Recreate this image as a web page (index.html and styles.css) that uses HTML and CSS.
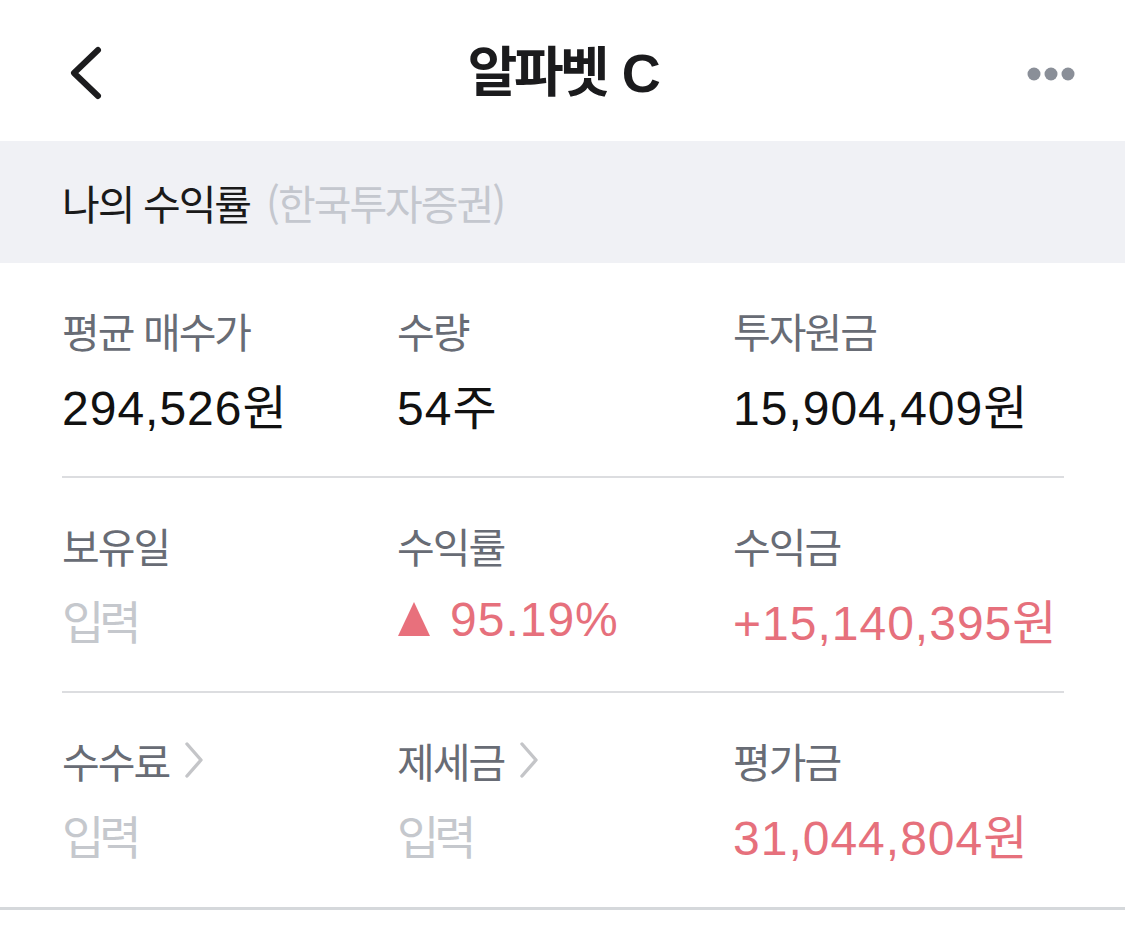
FILE: index.html
```html
<!DOCTYPE html>
<html lang="ko">
<head>
<meta charset="utf-8">
<title>알파벳 C</title>
<link rel="stylesheet" href="styles.css">
</head>
<body>
<header class="topbar">
  <div class="topbar-left">
    <svg class="back" width="40" height="56" viewBox="0 0 40 56" aria-hidden="true">
      <path d="M33 5 L9 28 L33 51" fill="none" stroke="#1c1c1e" stroke-width="6" stroke-linecap="round" stroke-linejoin="round"/>
    </svg>
  </div>
  <h1 class="title">알파벳 C</h1>
  <div class="topbar-right">
    <svg class="more" width="52" height="16" viewBox="0 0 52 16" aria-hidden="true">
      <circle cx="7" cy="8" r="6.5" fill="#8a8f98"/>
      <circle cx="24" cy="8" r="6.5" fill="#8a8f98"/>
      <circle cx="41" cy="8" r="6.5" fill="#8a8f98"/>
    </svg>
  </div>
</header>

<section class="band">
  <span class="band-title">나의 수익률</span>
  <span class="band-sub">(한국투자증권)</span>
</section>

<section class="stats">
  <div class="row">
    <div class="cell">
      <div class="label">평균 매수가</div>
      <div class="value">294,526원</div>
    </div>
    <div class="cell">
      <div class="label">수량</div>
      <div class="value">54주</div>
    </div>
    <div class="cell">
      <div class="label">투자원금</div>
      <div class="value">15,904,409원</div>
    </div>
  </div>
  <div class="row">
    <div class="cell">
      <div class="label">보유일</div>
      <div class="value placeholder">입력</div>
    </div>
    <div class="cell">
      <div class="label">수익률</div>
      <div class="value up"><svg class="tri" width="32" height="34" viewBox="0 0 32 34" aria-hidden="true"><polygon points="16,0 32,34 0,34" fill="#e8707c"/></svg>95.19%</div>
    </div>
    <div class="cell">
      <div class="label">수익금</div>
      <div class="value up">+15,140,395원</div>
    </div>
  </div>
  <div class="row">
    <div class="cell">
      <div class="label">수수료<svg class="chev" width="22" height="38" viewBox="0 0 22 38" aria-hidden="true"><path d="M4 3 L18 19 L4 35" fill="none" stroke="#c4c5c8" stroke-width="3.4" stroke-linecap="round" stroke-linejoin="round"/></svg></div>
      <div class="value placeholder">입력</div>
    </div>
    <div class="cell">
      <div class="label">제세금<svg class="chev" width="22" height="38" viewBox="0 0 22 38" aria-hidden="true"><path d="M4 3 L18 19 L4 35" fill="none" stroke="#c4c5c8" stroke-width="3.4" stroke-linecap="round" stroke-linejoin="round"/></svg></div>
      <div class="value placeholder">입력</div>
    </div>
    <div class="cell">
      <div class="label">평가금</div>
      <div class="value up">31,044,804원</div>
    </div>
  </div>
</section>
</body>
</html>
```

FILE: styles.css
```css
* {
  box-sizing: border-box;
}

html, body {
  margin: 0;
  padding: 0;
  background: #ffffff;
}

body {
  font-family: "Liberation Sans", "Noto Sans CJK KR", sans-serif;
  color: #111111;
}

.topbar {
  height: 141px;
  display: grid;
  grid-template-columns: 1fr auto 1fr;
  align-items: center;
  padding: 4px 46px 0 46px;
}

.topbar-left {
  display: flex;
  align-items: center;
  padding-left: 19px;
}

.back {
  display: block;
}

.topbar-right {
  display: flex;
  justify-content: flex-end;
  align-items: center;
  padding-top: 2px;
}

.more {
  display: block;
}

.title {
  margin: 0;
  font-family: "Liberation Sans", "Noto Sans CJK KR", sans-serif;
  font-size: 54px;
  font-weight: 700;
  letter-spacing: -3.5px;
  word-spacing: 4px;
  line-height: 60px;
  color: #1b1b1d;
}

.band {
  height: 122px;
  background: #f0f1f5;
  display: flex;
  align-items: center;
  padding-left: 62px;
  font-family: "Noto Sans CJK KR", sans-serif;
  font-size: 41px;
  letter-spacing: -2px;
}

.band-title {
  color: #1a1a1a;
}

.band-sub {
  color: #c4c7ce;
  margin-left: 16px;
}

.stats {
  border-bottom: 3px solid #d5d8db;
}

.row {
  display: grid;
  grid-template-columns: 335px 336px 1fr;
  margin: 0 61px 0 62px;
  padding: 40px 0 42px;
  border-bottom: 2px solid #dcdde0;
}

.row:last-child {
  border-bottom: none;
  padding-bottom: 43px;
}

.cell {
  display: flex;
  flex-direction: column;
  gap: 17px;
}

.label {
  display: flex;
  align-items: center;
  height: 54px;
  font-family: "Noto Sans CJK KR", sans-serif;
  font-size: 41px;
  letter-spacing: -2px;
  color: #686c75;
}

.chev {
  display: block;
  margin-left: 14px;
}

.value {
  display: flex;
  align-items: center;
  height: 60px;
  font-size: 48px;
  letter-spacing: 1px;
  color: #111111;
  white-space: nowrap;
}

.value.placeholder {
  font-family: "Noto Sans CJK KR", sans-serif;
  font-size: 46px;
  letter-spacing: -5px;
  color: #c5c8cd;
}

.value.up {
  color: #e6707c;
}

.tri {
  display: block;
  margin: 0 20px 0 1px;
}
```
